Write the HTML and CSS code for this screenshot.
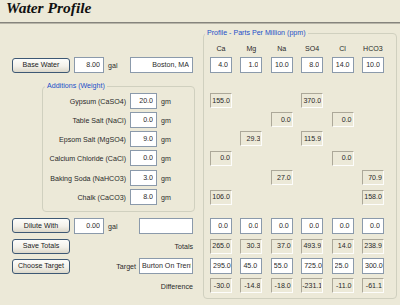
FILE: index.html
```html
<!DOCTYPE html>
<html>
<head>
<meta charset="utf-8">
<title>Water Profile</title>
<link rel="stylesheet" href="styles.css">
</head>
<body>
<header class="title-bar"><h1 class="title">Water Profile</h1></header>
<main class="form">
  <section class="left">
    <div class="row h18">
      <button class="btn">Base Water</button>
      <input class="field vol" value="8.00">
      <span class="unit">gal</span>
      <input class="field name name-base" value="Boston, MA">
    </div>
    <fieldset class="group additions">
      <legend>Additions (Weight)</legend>
      <div class="add-row h19"><label>Gypsum (CaSO4)</label><input class="field amt" value="20.0"><span class="unit">gm</span></div>
      <div class="add-row h19"><label>Table Salt (NaCl)</label><input class="field amt" value="0.0"><span class="unit">gm</span></div>
      <div class="add-row h19"><label>Epsom Salt (MgSO4)</label><input class="field amt" value="9.0"><span class="unit">gm</span></div>
      <div class="add-row h20"><label>Calcium Chloride (CaCl)</label><input class="field amt" value="0.0"><span class="unit">gm</span></div>
      <div class="add-row h19"><label>Baking Soda (NaHCO3)</label><input class="field amt" value="3.0"><span class="unit">gm</span></div>
      <div class="add-row h20"><label>Chalk (CaCO3)</label><input class="field amt" value="8.0"><span class="unit">gm</span></div>
    </fieldset>
    <div class="row h19">
      <button class="btn">Dilute With</button>
      <input class="field vol" value="0.00">
      <span class="unit">gal</span>
      <input class="field name" value="">
    </div>
    <div class="row h22">
      <button class="btn">Save Totals</button>
      <span class="row-label">Totals</span>
    </div>
    <div class="row h18">
      <button class="btn">Choose Target</button>
      <span class="row-label">Target</span>
      <input class="field name target-name" value="Burton On Trent">
    </div>
    <div class="row h21">
      <span class="row-label">Difference</span>
    </div>
  </section>

  <fieldset class="group profile">
    <legend>Profile - Parts Per Million (ppm)</legend>
    <div class="prow head h18"><span>Ca</span><span>Mg</span><span>Na</span><span>SO4</span><span>Cl</span><span>HCO3</span></div>
    <div class="prow h18">
      <input class="field cell" value="4.0"><input class="field cell" value="1.0"><input class="field cell" value="10.0"><input class="field cell" value="8.0"><input class="field cell" value="14.0"><input class="field cell" value="10.0">
    </div>
    <div class="prow h17"></div>
    <div class="prow h19">
      <input class="field cell ro" readonly value="155.0"><i></i><i></i><input class="field cell ro" readonly value="370.0"><i></i><i></i>
    </div>
    <div class="prow h19">
      <i></i><i></i><input class="field cell ro" readonly value="0.0"><i></i><input class="field cell ro" readonly value="0.0"><i></i>
    </div>
    <div class="prow h19">
      <i></i><input class="field cell ro" readonly value="29.3"><i></i><input class="field cell ro" readonly value="115.9"><i></i><i></i>
    </div>
    <div class="prow h20">
      <input class="field cell ro" readonly value="0.0"><i></i><i></i><i></i><input class="field cell ro" readonly value="0.0"><i></i>
    </div>
    <div class="prow h19">
      <i></i><i></i><input class="field cell ro" readonly value="27.0"><i></i><i></i><input class="field cell ro" readonly value="70.9">
    </div>
    <div class="prow h20">
      <input class="field cell ro" readonly value="106.0"><i></i><i></i><i></i><i></i><input class="field cell ro" readonly value="158.0">
    </div>
    <div class="prow h9"></div>
    <div class="prow h19">
      <input class="field cell" value="0.0"><input class="field cell" value="0.0"><input class="field cell" value="0.0"><input class="field cell" value="0.0"><input class="field cell" value="0.0"><input class="field cell" value="0.0">
    </div>
    <div class="prow h22">
      <input class="field cell ro" readonly value="265.0"><input class="field cell ro" readonly value="30.3"><input class="field cell ro" readonly value="37.0"><input class="field cell ro" readonly value="493.9"><input class="field cell ro" readonly value="14.0"><input class="field cell ro" readonly value="238.9">
    </div>
    <div class="prow h18">
      <input class="field cell tgt" value="295.0"><input class="field cell tgt" value="45.0"><input class="field cell tgt" value="55.0"><input class="field cell tgt" value="725.0"><input class="field cell tgt" value="25.0"><input class="field cell tgt" value="300.0">
    </div>
    <div class="prow h21">
      <input class="field cell ro" readonly value="-30.0"><input class="field cell ro" readonly value="-14.8"><input class="field cell ro" readonly value="-18.0"><input class="field cell ro" readonly value="-231.1"><input class="field cell ro" readonly value="-11.0"><input class="field cell ro" readonly value="-61.1">
    </div>
  </fieldset>
</main>
</body>
</html>
```
FILE: styles.css
```css
html, body {
  margin: 0;
  padding: 0;
}
body {
  width: 400px;
  height: 305px;
  overflow: hidden;
  background: #ece9d8;
  font-family: "Liberation Sans", Arial, sans-serif;
  font-size: 7.1px;
  color: #2a2a2a;
}

.title-bar {
  height: 22px;
  border-bottom: 1px solid #85847d;
  box-shadow: 0 1px 0 #b8b5a8;
}
.title {
  margin: 0;
  padding-left: 6px;
  font-family: "Liberation Serif", "Times New Roman", serif;
  font-size: 15.5px;
  font-weight: bold;
  font-style: italic;
  line-height: 16px;
  color: #111;
}

.form {
  display: flex;
  align-items: flex-start;
  gap: 8px;
  margin-top: 5px;
  padding-left: 12px;
}

.left {
  box-sizing: border-box;
  width: 183px;
  padding-top: 28px;
}

.h9 { height: 9px; }
.h17 { height: 17px; }
.h18 { height: 18px; }
.h19 { height: 19px; }
.h20 { height: 20px; }
.h21 { height: 21px; }
.h22 { height: 22px; }

.row {
  display: flex;
  align-items: center;
  padding-right: 2px;
}

.btn {
  box-sizing: border-box;
  width: 58px;
  height: 15px;
  margin: 0;
  padding: 0;
  font: inherit;
  color: #1a1a1a;
  border: 1px solid #3d5874;
  border-radius: 3px;
  background: linear-gradient(#fdfdfb, #f3f1ea 55%, #dcd8ca);
}

.field {
  box-sizing: border-box;
  height: 16px;
  margin: 0;
  padding: 0 3px 0 1px;
  font: inherit;
  color: #2a2a2a;
  text-align: right;
  background: #fff;
  border: 1px solid #8b9aab;
  border-radius: 0;
  outline: none;
}

.vol {
  width: 30px;
  margin-left: 4px;
}
.unit {
  margin-left: 4px;
  padding-top: 2px;
}
.name {
  width: 54px;
  margin-left: auto;
}
.name-base {
  width: 63px;
}
.row-label {
  margin-left: auto;
  padding-top: 2px;
}
.target-name {
  margin-left: 3px;
  text-align: left;
  padding: 0 1px 0 2px;
}

.group {
  margin: 0;
  border: 1px solid #d0d0bf;
  border-radius: 4px;
  min-width: 0;
}
.group legend {
  color: #1c4fc8;
  padding: 0 2px;
}

.additions {
  box-sizing: border-box;
  width: 153px;
  margin: 8px 0 4px 30px;
  padding: 0 0 4px 0;
}
.additions legend {
  margin-left: 2px;
  line-height: 9px;
}
.add-row {
  display: grid;
  grid-template-columns: 83px 27px auto;
  column-gap: 4px;
  align-items: center;
}
.add-row label {
  text-align: right;
  padding-top: 2px;
  white-space: nowrap;
}
.add-row .unit {
  margin-left: 0;
}

.profile {
  box-sizing: border-box;
  width: 194px;
  padding: 0 0 2px 6px;
}
.profile legend {
  margin-left: -5px;
  line-height: 10px;
}
.prow {
  box-sizing: border-box;
  display: grid;
  grid-template-columns: repeat(6, 30.4px);
  align-items: center;
}
.prow.head {
  padding-top: 4px;
}
.prow.head span {
  width: 22px;
  text-align: center;
}

.cell {
  width: 22px;
}
.ro {
  height: 15px;
  background: transparent;
  border-color: #aca899 #fdfdfb #fdfdfb #aca899;
  padding: 0 1px 0 0;
}
.tgt {
  text-align: left;
  padding: 0 0 0 2px;
}
```
